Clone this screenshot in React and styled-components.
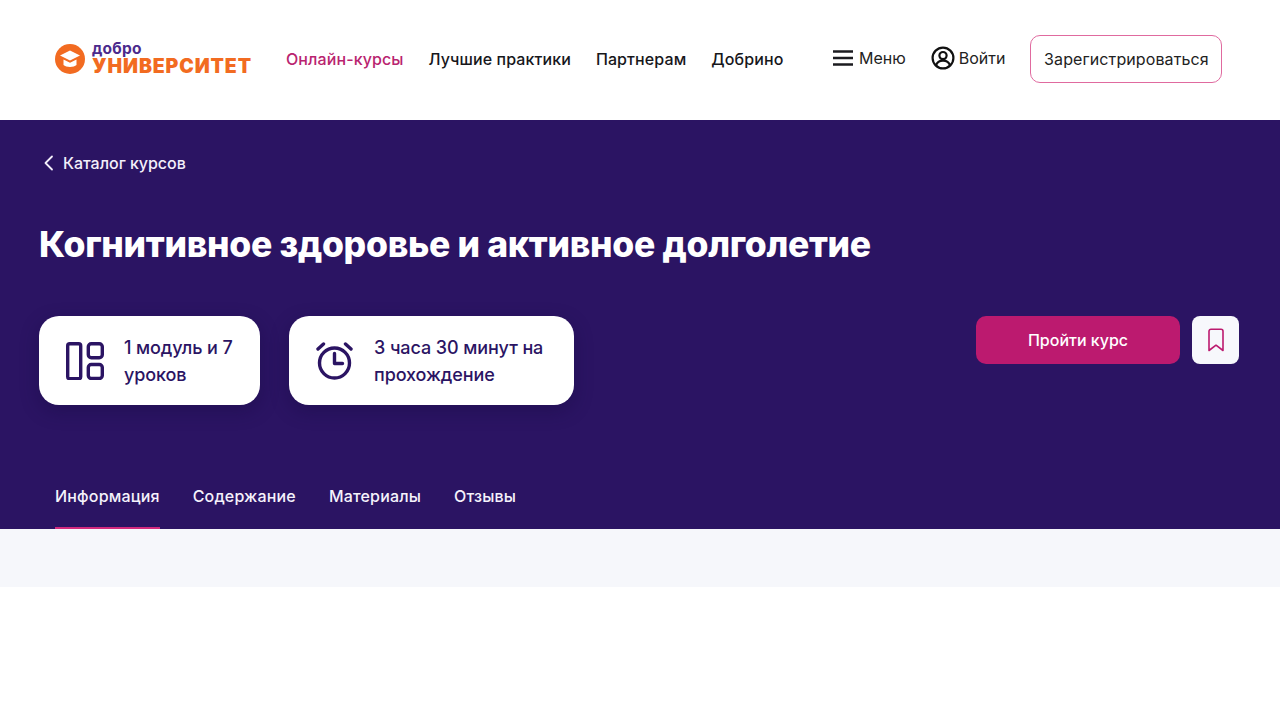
import React from "react";
import styled, { createGlobalStyle } from "styled-components";

const Global = createGlobalStyle`
  html, body { margin: 0; padding: 0; background: #fff; }
  body { font-family: Inter, "Noto Sans", sans-serif; color: #1b1b1f; }
  * { box-sizing: border-box; }
`;
const Page = styled.div`width: 1280px; height: 720px; overflow: hidden; background: #fff;`;
const Header = styled.header`
  height: 120px; display: flex; align-items: center; padding: 0 58px 2px 55px;
`;
const Logo = styled.a`display: flex; align-items: center; gap: 7px; width: 231px; flex: none;`;
const LogoWords = styled.span`display: flex; flex-direction: column;`;
const LogoTop = styled.span`
  font-size: 15.5px; font-weight: 700; color: #4b2a8c; line-height: 12px; height: 12px; margin-bottom: 4px; margin-top: -2px; letter-spacing: 0.2px;
`;
const LogoBottom = styled.span`
  font-size: 19.5px; font-weight: 900; color: #f26b21; line-height: 15px; height: 15px; letter-spacing: 0.87px; white-space: nowrap;
`;
const Nav = styled.nav`display: flex; flex: none; gap: 25px; width: 546px;`;
const NavLink = styled.a`
  font-size: 16px; font-weight: 500; letter-spacing: 0.1px; white-space: nowrap; color: ${p => p.$active ? "#b9246f" : "#17171b"};
`;
const Actions = styled.div`display: flex; align-items: center; flex: none;`;
const ActionLink = styled.a`
  display: flex; align-items: center; gap: ${p => p.$gap}px; font-size: 16px; margin-right: 25px; margin-top: -3px; color: #222; white-space: nowrap;
`;
const RegisterButton = styled.button`
  width: 192px; height: 48px; background: #fff; border: 1px solid #e06a9f; border-radius: 10px; font: 400 16px Inter, sans-serif; letter-spacing: 0.1px; color: #222; padding: 0;
`;
const Hero = styled.section`
  height: 409px; background: #2b1463; padding: 31px 41px 0 39px; display: flex; flex-direction: column; color: #fff;
`;
const Back = styled.a`
  display: flex; align-items: center; gap: 8px; height: 24px; margin-left: 4px; font-size: 16px; font-weight: 500; color: #f3effa; letter-spacing: -0.03px;
`;
const Title = styled.h1`
  margin: 48px 0 0; font-size: 35.5px; line-height: 44px; font-weight: 800; color: #fff; letter-spacing: -0.3px; white-space: nowrap;
`;
const Row = styled.div`display: flex; justify-content: space-between; align-items: flex-start; margin-top: 49px;`;
const Cards = styled.div`display: flex; gap: 29px;`;
const Card = styled.div`
  width: ${p => p.$w}px; height: 89px; background: #fff; border-radius: 20px; display: flex; align-items: center; padding-left: 25px; gap: 18px; color: #2b1463;
  box-shadow: 0 6px 18px rgba(20, 8, 60, .35);
`;
const CardIcon = styled.span`display: flex; flex: none; width: 42px; justify-content: center;`;
const CardText = styled.div`font-size: 18px; line-height: 27px; font-weight: 500; letter-spacing: -0.1px; white-space: pre-line;`;
const Buttons = styled.div`display: flex; gap: 12px;`;
const CourseButton = styled.button`
  width: 204px; height: 48px; border: 0; border-radius: 10px; background: #bc1a6f; color: #fff; font: 500 16px Inter, sans-serif; padding: 0;
`;
const BookmarkButton = styled.button`
  width: 47px; height: 48px; border: 0; border-radius: 8px; background: #f7f8fc; display: flex; align-items: center; justify-content: center; padding: 0;
`;
const Tabs = styled.div`display: flex; gap: 33px; margin-top: auto; padding-left: 16px; height: 65px;`;
const Tab = styled.a`
  height: 65px; padding-top: 20px; font-size: 16px; line-height: 24px; font-weight: 500; letter-spacing: 0.17px; color: #f5f2fb;
  border-bottom: 2px solid ${p => p.$active ? "#d32a7e" : "transparent"};
`;
const Strip = styled.div`height: 58px; background: #f6f7fb;`;

const Burger = () => (
  <svg width="22" height="18" viewBox="0 0 22 18" fill="none" stroke="#1b1b1f" strokeWidth="2.4"><path d="M1 2.5h20M1 9h20M1 15.5h20" /></svg>
);
const User = () => (
  <svg width="24" height="24" viewBox="0 0 24 24" fill="none" stroke="#111" strokeWidth="2.2"><circle cx="12" cy="12" r="10.4" /><circle cx="12" cy="9.6" r="3.6" /><path d="M5 19.5c1-3.4 3.6-4.9 7-4.9s6 1.5 7 4.9" /></svg>
);
const Chevron = () => (
  <svg width="12" height="16" viewBox="0 0 12 16" fill="none" stroke="#f3effa" strokeWidth="1.8" strokeLinecap="round" strokeLinejoin="round"><path d="M9 1.5 2.5 8 9 14.5" /></svg>
);
const Modules = () => (
  <svg width="38" height="38" viewBox="0 0 38 38" fill="none" stroke="#2b1463" strokeWidth="3.4"><rect x="1.7" y="1.7" width="13" height="35" rx="2" /><rect x="22.3" y="1.7" width="14" height="14" rx="3" /><rect x="22.3" y="22.5" width="14" height="14" rx="3" /></svg>
);
const Clock = () => (
  <svg width="38" height="38" viewBox="0 0 38 38" fill="none" stroke="#2b1463" strokeWidth="3.4" strokeLinecap="round" strokeLinejoin="round"><circle cx="18.5" cy="21" r="15" /><path d="M18.5 11.5v10h8" /><path d="M2 7l5.5-5M35 7l-5.5-5" /></svg>
);
const Bookmark = () => (
  <svg width="18" height="24" viewBox="0 0 18 24" fill="none" stroke="#bc1a6f" strokeWidth="1.6" strokeLinejoin="round"><path d="M2 3.2A2 2 0 0 1 4 1.2h10a2 2 0 0 1 2 2v19.3l-7-5.3-7 5.3z" /></svg>
);
const Cap = () => (
  <svg width="30" height="30" viewBox="0 0 30 30"><circle cx="15" cy="15" r="15" fill="#f26b21" /><path d="M15 6.5 25 11.5 15 16.5 5 11.5z" fill="#fff" /><path d="M8.5 15.5v5.5c2.5 2.6 10.5 2.6 13 0v-5.5L15 18.8z" fill="#fff" /></svg>
);

export default function App() {
  return (
    <Page>
      <Global />
      <Header>
        <Logo>
          <Cap />
          <LogoWords>
            <LogoTop>добро</LogoTop>
            <LogoBottom>УНИВЕРСИТЕТ</LogoBottom>
          </LogoWords>
        </Logo>
        <Nav>
          <NavLink $active>Онлайн-курсы</NavLink>
          <NavLink>Лучшие практики</NavLink>
          <NavLink>Партнерам</NavLink>
          <NavLink>Добрино</NavLink>
        </Nav>
        <Actions>
          <ActionLink $gap={5}><Burger />Меню</ActionLink>
          <ActionLink $gap={4}><User />Войти</ActionLink>
          <RegisterButton>Зарегистрироваться</RegisterButton>
        </Actions>
      </Header>
      <Hero>
        <Back><Chevron />Каталог курсов</Back>
        <Title>Когнитивное здоровье и активное долголетие</Title>
        <Row>
          <Cards>
            <Card $w={221}><CardIcon><Modules /></CardIcon><CardText>{"1 модуль и 7\nуроков"}</CardText></Card>
            <Card $w={285}><CardIcon><Clock /></CardIcon><CardText>{"3 часа 30 минут на\nпрохождение"}</CardText></Card>
          </Cards>
          <Buttons>
            <CourseButton>Пройти курс</CourseButton>
            <BookmarkButton><Bookmark /></BookmarkButton>
          </Buttons>
        </Row>
        <Tabs>
          <Tab $active>Информация</Tab>
          <Tab>Содержание</Tab>
          <Tab>Материалы</Tab>
          <Tab>Отзывы</Tab>
        </Tabs>
      </Hero>
      <Strip />
    </Page>
  );
}
